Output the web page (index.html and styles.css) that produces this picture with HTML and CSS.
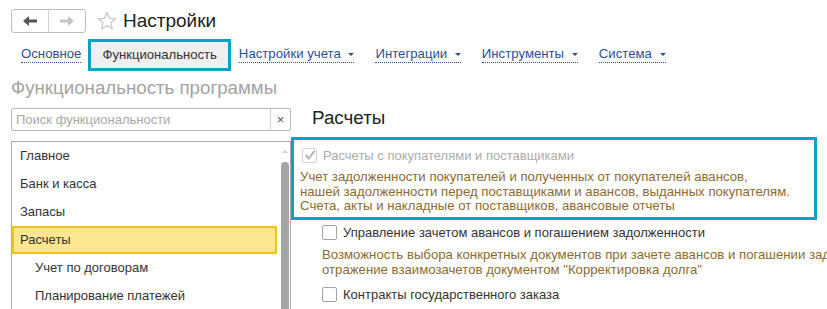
FILE: index.html
```html
<!DOCTYPE html>
<html>
<head>
    <title>Настройки</title>
    <link rel="stylesheet" href="styles.css">
</head>
<body>
    <div class="header">
        <div class="nav">
            <div class="nav-btn">
                <svg width="14" height="10" viewBox="0 0 14 10"><path d="M0 5 L6 0 L6 3.5 L14 3.5 L14 6.5 L6 6.5 L6 10 Z" fill="#555"/></svg>
            </div>
            <div class="nav-btn nav-next">
                <svg width="14" height="10" viewBox="0 0 14 10"><path d="M14 5 L8 0 L8 3.5 L0 3.5 L0 6.5 L8 6.5 L8 10 Z" fill="#c4c4c4"/></svg>
            </div>
        </div>
        <svg class="star" width="20" height="20" viewBox="0 0 20 20"><path d="M10 1.5 L12.5 7.3 L18.6 7.8 L13.9 11.8 L15.4 17.9 L10 14.6 L4.6 17.9 L6.1 11.8 L1.4 7.8 L7.5 7.3 Z" fill="none" stroke="#c8c8c8" stroke-width="1.2" stroke-linejoin="round"/></svg>
        <h1>Настройки</h1>
    </div>

    <div class="tabs">
        <a class="tab">Основное</a>
        <div class="tab-active">Функциональность</div>
        <a class="tab">Настройки учета <span class="caret"></span></a>
        <a class="tab">Интеграции <span class="caret"></span></a>
        <a class="tab">Инструменты <span class="caret"></span></a>
        <a class="tab">Система <span class="caret"></span></a>
    </div>

    <h2 class="section-title">Функциональность программы</h2>

    <div class="main">
        <div class="sidebar">
            <div class="search">
                <div class="search-input">Поиск функциональности</div>
                <div class="search-clear">×</div>
            </div>
            <div class="list">
                <div class="list-items">
                    <div class="item">Главное</div>
                    <div class="item">Банк и касса</div>
                    <div class="item">Запасы</div>
                    <div class="item selected">Расчеты</div>
                    <div class="item sub">Учет по договорам</div>
                    <div class="item sub">Планирование платежей</div>
                </div>
                <div class="scrollbar">
                    <div class="scroll-up"></div>
                    <div class="scroll-thumb"></div>
                </div>
            </div>
        </div>

        <div class="content">
            <h3 class="content-title">Расчеты</h3>

            <div class="highlight">
                <div class="option disabled">
                    <span class="checkbox checked">
                        <svg width="12" height="12" viewBox="0 0 12 12"><path d="M1.5 6 L4.8 9.5 L10.8 1.5" fill="none" stroke="#b5b5b5" stroke-width="2"/></svg>
                    </span>
                    Расчеты с покупателями и поставщиками
                </div>
                <div class="desc">
                    Учет задолженности покупателей и полученных от покупателей авансов,<br>
                    нашей задолженности перед поставщиками и авансов, выданных покупателям.<br>
                    Счета, акты и накладные от поставщиков, авансовые отчеты
                </div>
            </div>

            <div class="group">
                <div class="option">
                    <span class="checkbox"></span>
                    Управление зачетом авансов и погашением задолженности
                </div>
                <div class="desc">
                    Возможность выбора конкретных документов при зачете авансов и погашении задолженности,<br>
                    отражение взаимозачетов документом "Корректировка долга"
                </div>
                <div class="option option-next">
                    <span class="checkbox"></span>
                    Контракты государственного заказа
                </div>
            </div>
        </div>
    </div>
</body>
</html>
```

FILE: styles.css
```css
body {
    margin: 0;
    font-family: "Liberation Sans", Arial, sans-serif;
    font-size: 13px;
    color: #333;
    background: #fff;
    overflow: hidden;
}

.header {
    display: flex;
    align-items: center;
    padding: 9px 0 0 11px;
    height: 24px;
}

.nav {
    display: flex;
    height: 22px;
    border: 1px solid #bdbdbd;
    border-radius: 3px;
    background: #fff;
}

.nav-btn {
    width: 36px;
    display: flex;
    align-items: center;
    justify-content: center;
}

.nav-next {
    border-left: 1px solid #d0d0d0;
}

.star {
    margin-left: 11px;
}

h1 {
    margin: 0 0 0 6px;
    font-size: 19px;
    font-weight: normal;
    color: #222;
    line-height: 24px;
}

.tabs {
    display: flex;
    align-items: center;
    margin-top: 6px;
    padding-left: 21px;
    height: 32px;
}

.tab {
    color: #2a4f9a;
    border-bottom: 1px dotted #2a4f9a;
    line-height: 16px;
    margin-right: 21px;
    margin-top: -1px;
    white-space: nowrap;
    font-size: 13.2px;
}

.tab:first-child {
    margin-right: 7px;
}

.caret {
    display: inline-block;
    width: 0;
    height: 0;
    margin-left: 4px;
    border-left: 3px solid transparent;
    border-right: 3px solid transparent;
    border-top: 3px solid #2a4f9a;
    vertical-align: middle;
}

.tab-active {
    height: 26px;
    line-height: 26px;
    padding: 0 11px;
    background: #efefef;
    border: 3px solid #0aa3c3;
    margin-right: 8px;
    color: #333;
    font-size: 13.1px;
}

.section-title {
    margin: 5px 0 0 11px;
    font-size: 18.7px;
    font-weight: normal;
    color: #a3a3a3;
    line-height: 23px;
}

.main {
    display: flex;
}

.sidebar {
    width: 280px;
    flex-shrink: 0;
    margin-left: 11px;
    padding-top: 9px;
}

.search {
    display: flex;
    height: 21px;
    border: 1px solid #b8b8b8;
    border-radius: 2px;
}

.search-input {
    flex: 1;
    padding-left: 4px;
    line-height: 21px;
    color: #a8a8a8;
}

.search-clear {
    width: 19px;
    border-left: 1px solid #cfcfcf;
    text-align: center;
    line-height: 21px;
    color: #555;
}

.list {
    display: flex;
    margin-top: 10px;
    height: 200px;
    border: 1px solid #a9a9a9;
    border-bottom: none;
}

.list-items {
    flex: 1;
}

.item {
    height: 28px;
    line-height: 28px;
    padding-left: 8px;
}

.item.selected {
    height: 24px;
    line-height: 24px;
    padding-left: 6px;
    background: #fde690;
    border: 2px solid #f6c417;
}

.item.sub {
    padding-left: 23px;
}

.scrollbar {
    width: 13px;
    display: flex;
    flex-direction: column;
    align-items: center;
    padding-left: 2px;
    box-sizing: border-box;
}

.scroll-up {
    width: 0;
    height: 0;
    margin-top: 8px;
    border-left: 3px solid transparent;
    border-right: 3px solid transparent;
    border-bottom: 3px solid #cfcfcf;
}

.scroll-thumb {
    width: 8px;
    flex: 1;
    margin-top: 9px;
    background: #a5a5a5;
    border-radius: 4px 4px 0 0;
}

.content {
    flex: 1;
    min-width: 0;
}

.content-title {
    margin: 8px 0 0 21px;
    font-size: 18.8px;
    font-weight: normal;
    color: #222;
    line-height: 22px;
}

.highlight {
    margin-top: 8px;
    width: 508px;
    border: 3px solid #0aa3c3;
    padding: 5px 6px 3px;
}

.option {
    display: flex;
    align-items: center;
    height: 20px;
    color: #333;
}

.option.disabled {
    color: #acacac;
}

.checkbox {
    width: 13px;
    height: 13px;
    margin-right: 6px;
    border: 1px solid #a3a3a3;
    border-radius: 2px;
    background: #fff;
    display: flex;
    align-items: center;
    justify-content: center;
}

.checkbox.checked {
    margin-left: 2px;
    border-color: #d2d2d2;
}

.desc {
    margin-top: 5px;
    color: #8d6b30;
    line-height: 14.5px;
    white-space: nowrap;
    font-size: 13.2px;
}

.group {
    padding: 3px 0 0 31px;
}

.group .desc {
    margin-top: 4px;
    line-height: 15px;
}

.option-next {
    margin-top: 8px;
}
```
